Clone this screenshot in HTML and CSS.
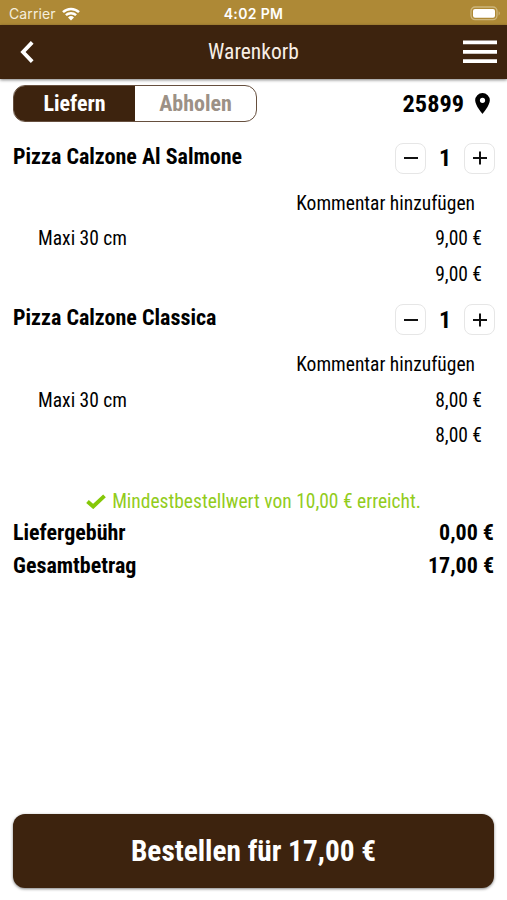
FILE: index.html
```
<!DOCTYPE html>
<html lang="de">
  <head>
    <meta charset="UTF-8" />
    <meta name="viewport" content="width=device-width, initial-scale=1.0" />
    <title>Warenkorb</title>
    <link rel="stylesheet" href="styles.css">
  </head>
  <body>
    <div class="status-bar">
      <div class="carrier">
        <span>Carrier</span>
        <svg class="wifi" viewBox="0 0 18 14">
          <path d="M1 5.2a11.6 11.6 0 0 1 16 0M3.9 8.2a7.4 7.4 0 0 1 10.2 0" fill="none" stroke="#fff" stroke-width="2.5" />
          <path d="M9 13.6l-3-3.1a4.3 4.3 0 0 1 6 0z" fill="#fff" />
        </svg>
      </div>
      <div class="clock">4:02 PM</div>
      <svg class="battery" viewBox="0 0 31 15">
        <rect x="1" y="1" width="26" height="12.6" rx="4" fill="none" stroke="#cdb67c" stroke-width="1.3" />
        <rect x="3" y="3" width="22" height="8.8" rx="2" fill="#fff" />
        <path d="M28.6 5.2c1.6.6 1.6 3.6 0 4.2z" fill="#cdb67c" />
      </svg>
    </div>

    <header class="nav-bar">
      <button class="icon-button">
        <svg class="back" viewBox="0 0 14 22"><path d="M12.2 1.4L3 11l9.2 9.6" fill="none" stroke="#fff" stroke-width="3.8" /></svg>
      </button>
      <h1 class="nav-title">Warenkorb</h1>
      <button class="icon-button">
        <svg class="burger" viewBox="0 0 34 24"><path d="M0 2.4h34M0 11.8h34M0 21.2h34" stroke="#fff" stroke-width="3.8" /></svg>
      </button>
    </header>

    <main class="cart">
      <div class="delivery">
        <div class="segment">
          <button class="segment-item active">Liefern</button>
          <button class="segment-item">Abholen</button>
        </div>
        <div class="zip">
          <span>25899</span>
          <svg class="pin" viewBox="0 0 14 20"><path fill-rule="evenodd" d="M7 0a7 7 0 0 0-7 7c0 5 7 13 7 13s7-8 7-13a7 7 0 0 0-7-7zm0 4.5a2.5 2.5 0 1 1 0 5 2.5 2.5 0 0 1 0-5z" /></svg>
        </div>
      </div>

      <section class="item">
        <div class="item-head">
          <h2 class="item-name">Pizza Calzone Al Salmone</h2>
          <div class="stepper">
            <button class="step"><svg viewBox="0 0 14 14"><path d="M0 7h14" /></svg></button>
            <span class="count">1</span>
            <button class="step"><svg viewBox="0 0 14 14"><path d="M0 7h14M7 .5v13" /></svg></button>
          </div>
        </div>
        <div class="item-row comment"><span>Kommentar hinzufügen</span></div>
        <div class="item-row"><span>Maxi 30 cm</span><span>9,00 €</span></div>
        <div class="item-row total"><span>9,00 €</span></div>
      </section>

      <section class="item">
        <div class="item-head">
          <h2 class="item-name">Pizza Calzone Classica</h2>
          <div class="stepper">
            <button class="step"><svg viewBox="0 0 14 14"><path d="M0 7h14" /></svg></button>
            <span class="count">1</span>
            <button class="step"><svg viewBox="0 0 14 14"><path d="M0 7h14M7 .5v13" /></svg></button>
          </div>
        </div>
        <div class="item-row comment"><span>Kommentar hinzufügen</span></div>
        <div class="item-row"><span>Maxi 30 cm</span><span>8,00 €</span></div>
        <div class="item-row total"><span>8,00 €</span></div>
      </section>

      <div class="minimum">
        <svg class="check" viewBox="0 0 20 15"><path d="M1.5 7.5l5.7 5L18.5 1.8" fill="none" stroke="#85c808" stroke-width="3.9" /></svg>
        <span>Mindestbestellwert von 10,00 € erreicht.</span>
      </div>
      <div class="sum-row"><span>Liefergebühr</span><span>0,00 €</span></div>
      <div class="sum-row"><span>Gesamtbetrag</span><span>17,00 €</span></div>
    </main>

    <footer class="footer">
      <button class="order">Bestellen für 17,00 €</button>
    </footer>
  </body>
</html>
```
FILE: styles.css
```
* {
  box-sizing: border-box;
}
body {
  margin: 0;
  height: 900px;
  display: flex;
  flex-direction: column;
  background-color: #fff;
  color: #000;
  font-family: "Roboto Condensed", Roboto, sans-serif;
  font-stretch: 75%;
  font-size: 19.5px;
}
button {
  padding: 0;
  border: none;
  background: none;
  color: inherit;
  font: inherit;
  cursor: pointer;
}
svg {
  display: block;
}

/* Status bar */
.status-bar {
  height: 25px;
  padding: 2px 6px 0 9px;
  display: grid;
  grid-template-columns: 1fr auto 1fr;
  align-items: center;
  background-color: #ae8936;
  color: #fff;
  font-family: Inter, sans-serif;
  font-stretch: normal;
  font-size: 14px;
}
.carrier {
  display: flex;
  align-items: center;
  gap: 6px;
  color: #f5eedd;
  letter-spacing: 0.1px;
}
.wifi {
  width: 18px;
  height: 14px;
}
.clock {
  margin-right: 3px;
  font-size: 14px;
  font-weight: 600;
  letter-spacing: 0.35px;
}
.battery {
  width: 31px;
  height: 15px;
  justify-self: end;
}

/* Navigation */
.nav-bar {
  height: 54px;
  padding: 0 10px 0 20px;
  display: grid;
  grid-template-columns: 1fr auto 1fr;
  align-items: center;
  background-color: #3d230e;
  color: #fff;
  box-shadow: 0 1px 3px rgba(0, 0, 0, 0.5);
}
.icon-button {
  justify-self: start;
}
.icon-button:last-child {
  justify-self: end;
}
.back {
  width: 14px;
  height: 22px;
}
.burger {
  width: 34px;
  height: 24px;
}
.nav-title {
  margin: 0 10px 1px 0;
  font-size: 21.5px;
  font-weight: 400;
  color: #f8efe6;
}

/* Cart */
.cart {
  flex: 1;
  padding: 6px 13px 0;
}
.delivery {
  display: flex;
  justify-content: space-between;
  align-items: center;
  margin-bottom: 8.5px;
}
.segment {
  width: 244px;
  height: 37px;
  display: flex;
  border: 1px solid #664f3e;
  border-radius: 12px;
  overflow: hidden;
}
.segment-item {
  flex: 1;
  color: #9c9186;
  font-size: 22px;
  font-weight: 700;
}
.segment-item.active {
  background-color: #3d230e;
  color: #fff;
}
.zip {
  display: flex;
  align-items: center;
  gap: 11px;
  padding-right: 4px;
  font-size: 24.3px;
  font-weight: 700;
}
.pin {
  width: 15px;
  height: 21px;
}
.item-head {
  height: 55px;
  display: flex;
  justify-content: space-between;
  align-items: center;
}
.item-name {
  margin: 0 0 4px;
  font-size: 22px;
  font-weight: 700;
}
.stepper {
  display: flex;
  align-items: center;
  margin-right: -1px;
}
.step {
  width: 31px;
  height: 31px;
  display: flex;
  justify-content: center;
  align-items: center;
  border: 1px solid #e6e6e6;
  border-radius: 8px;
}
.step svg {
  width: 14px;
  height: 14px;
  stroke: #111;
  stroke-width: 2;
}
.count {
  width: 38px;
  text-align: center;
  font-size: 24px;
  font-weight: 700;
}
.item-row {
  height: 35.5px;
  padding: 0 12px 0 25px;
  display: flex;
  justify-content: space-between;
  align-items: center;
}
.comment {
  padding-right: 19px;
  justify-content: flex-end;
}
.total {
  justify-content: flex-end;
}

/* Totals */
.minimum {
  height: 29px;
  margin-top: 33px;
  display: flex;
  justify-content: center;
  align-items: center;
  gap: 6px;
  color: #92cc1c;
}
.check {
  width: 20px;
  height: 15px;
}
.sum-row {
  height: 33px;
  display: flex;
  justify-content: space-between;
  align-items: center;
  font-size: 22px;
  font-weight: 700;
}

/* Order button */
.footer {
  padding: 0 13px 12px;
}
.order {
  width: 100%;
  height: 74px;
  border-radius: 12px;
  background-color: #3d230e;
  box-shadow: 0 1px 3px rgba(0, 0, 0, 0.5);
  color: #fff;
  font-size: 29.3px;
  font-weight: 700;
}
```
